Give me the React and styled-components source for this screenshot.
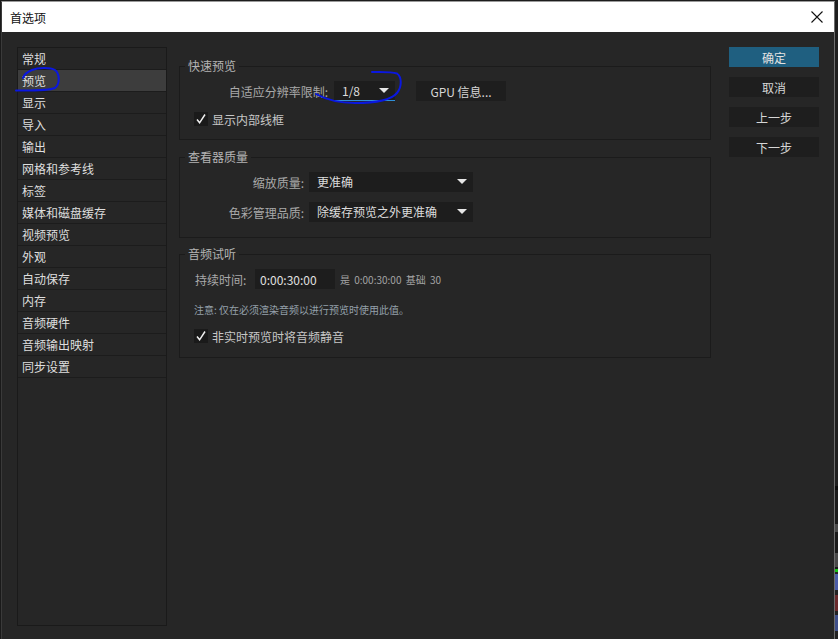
import React from 'react'
import styled, { createGlobalStyle } from 'styled-components'

const GlobalStyle = createGlobalStyle`
    html, body {
        margin: 0;
        padding: 0;
        background: #1c1c1c;
    }
    body {
        font-family: "Noto Sans CJK SC", "Noto Sans", "Liberation Sans", sans-serif;
        font-size: 12px;
    }
`;

const Screen = styled.div`
    display: flex;
    width: 838px;
    height: 639px;
    overflow: hidden;
    position: relative;
`;

const LeftEdge = styled.div`
    width: 1px;
    background: #1a1a1a;
`;

const Window = styled.div`
    width: 832px;
    margin-top: 1px;
    display: flex;
    flex-direction: column;
    border-top: 1px solid #9a9a9a;
    border-left: 1px solid #3a3a3a;
    border-right: 1px solid #6e6e6e;
`;

const TitleBar = styled.div`
    height: 30px;
    flex: none;
    background: #ffffff;
    display: flex;
    align-items: center;
    justify-content: space-between;
    padding: 0 8px 0 8px;
    color: #111;
    font-size: 12px;
`;

const CloseIcon = () => (
    <svg width="14" height="14" viewBox="0 0 14 14" style={{ marginRight: 2 }}>
        <path d="M1.5 1.5 L12.5 12.5 M12.5 1.5 L1.5 12.5" stroke="#111" strokeWidth="1.1" />
    </svg>
);

const Body = styled.div`
    flex: 1;
    background: #262626;
    display: flex;
    padding: 15px 15px 0 15px;
    gap: 12px;
`;

const Sidebar = styled.ul`
    list-style: none;
    margin: 0;
    padding: 0;
    width: 148px;
    height: 577px;
    flex: none;
    border: 1px solid #1a1a1a;
`;

const SideItem = styled.li`
    height: 21px;
    line-height: 21px;
    padding-left: 4px;
    border-bottom: 1px solid #1c1c1c;
    color: #dedede;
    background: ${p => (p.$active ? '#3d3d3d' : 'transparent')};
`;

const Main = styled.div`
    width: 532px;
    flex: none;
    padding-top: 11px;
    display: flex;
    flex-direction: column;
`;

const Group = styled.fieldset`
    margin: ${p => p.$top || 0}px 0 0 0;
    padding: 7px 0 ${p => p.$bottom || 11}px 0;
    border: 1px solid #1b1b1b;
    min-inline-size: 0;
    display: flex;
    flex-direction: column;
    gap: ${p => p.$gap || 10}px;
`;

const Legend = styled.legend`
    margin-left: 5px;
    padding: 0 3px;
    line-height: 16px;
    color: #b4b4b4;
`;

const Row = styled.div`
    display: flex;
    align-items: center;
    height: ${p => p.$h || 20}px;
    padding-left: ${p => p.$indent || 0}px;
`;

const Label = styled.span`
    width: ${p => p.$w}px;
    flex: none;
    text-align: ${p => p.$align || 'right'};
    color: #a9a9a9;
    margin-right: ${p => p.$gap || 6}px;
`;

const Dropdown = styled.div`
    width: ${p => p.$w}px;
    height: 20px;
    box-sizing: border-box;
    display: flex;
    align-items: center;
    justify-content: space-between;
    padding: 0 6px 0 8px;
    background: #1d1d1d;
    color: #dcdcdc;
    border-bottom: 1px solid ${p => (p.$focus ? '#2f8fd8' : '#1d1d1d')};
`;

const Arrow = styled.span`
    width: 0;
    height: 0;
    border-left: 5px solid transparent;
    border-right: 5px solid transparent;
    border-top: 5px solid #e6e6e6;
`;

const Button = styled.div`
    width: ${p => p.$w || 90}px;
    height: 20px;
    display: flex;
    align-items: center;
    justify-content: center;
    background: ${p => (p.$primary ? '#1f5f80' : '#1e1e1e')};
    color: ${p => (p.$primary ? '#e2e2e2' : '#d6d6d6')};
    margin-left: ${p => p.$ml || 0}px;
    flex: none;
`;

const CheckBox = styled.span`
    width: 14px;
    height: 14px;
    flex: none;
    background: #1a1a1a;
    display: flex;
    align-items: center;
    justify-content: center;
    margin-right: 4px;
`;

const CheckText = styled.span`
    color: #c6c6c6;
`;

const TimeInput = styled.div`
    width: 80px;
    height: 20px;
    box-sizing: border-box;
    padding-left: 5px;
    display: flex;
    align-items: center;
    background: #1d1d1d;
    color: #e0e0e0;
    margin-right: 5px;
`;

const SmallText = styled.span`
    font-size: 10px;
    color: #a4a4a4;
    word-spacing: 2px;
`;

const Note = styled.div`
    height: 14px;
    line-height: 14px;
    padding-left: 14px;
    margin-bottom: -4px;
    font-size: 10px;
    color: #94a0aa;
`;

const ButtonColumn = styled.div`
    display: flex;
    flex-direction: column;
    gap: 10px;
    margin-left: 6px;
`;

const RightStrip = styled.div`
    width: 3px;
    display: flex;
    flex-direction: column;
    background: #1e1e1e;
`;

const StripBlock = styled.div`
    height: ${p => p.$h}px;
    background: ${p => p.$c};
    flex: none;
`;

const Scribble = styled.svg`
    position: absolute;
    left: 0;
    top: 0;
    pointer-events: none;
`;

const Check = () => (
    <svg width="12" height="12" viewBox="0 0 12 12">
        <path d="M2 6.5 L4.6 9.8 L10 1.5" fill="none" stroke="#f0f0f0" strokeWidth="1.5" />
    </svg>
);

const categories = [
    '常规', '预览', '显示', '导入', '输出', '网格和参考线', '标签', '媒体和磁盘缓存',
    '视频预览', '外观', '自动保存', '内存', '音频硬件', '音频输出映射', '同步设置',
];

const strip = [
    [486, '#1e1e1e'], [4, '#0a0a0a'], [34, '#1a1a1a'], [8, '#4a4a4a'], [21, '#1a1a1a'],
    [14, '#4a4a4a'], [2, '#1a1a1a'], [3, '#17c317'], [2, '#222'], [16, '#4b5ca8'],
    [5, '#222'], [16, '#6a2a2c'], [4, '#222'], [16, '#3f4f8a'], [8, '#222'],
];

export default function App() {
    return (
        <>
            <GlobalStyle />
            <Screen>
                <LeftEdge />
                <Window>
                    <TitleBar>
                        <span>首选项</span>
                        <CloseIcon />
                    </TitleBar>
                    <Body>
                        <Sidebar>
                            {categories.map(c => (
                                <SideItem key={c} $active={c === '预览'}>{c}</SideItem>
                            ))}
                        </Sidebar>

                        <Main>
                            <Group $gap={9}>
                                <Legend>快速预览</Legend>
                                <Row>
                                    <Label $w={148}>自适应分辨率限制:</Label>
                                    <Dropdown $w={61} $focus>
                                        1/8 <Arrow />
                                    </Dropdown>
                                    <Button $ml={21}>GPU 信息...</Button>
                                </Row>
                                <Row $h={18} $indent={14}>
                                    <CheckBox><Check /></CheckBox>
                                    <CheckText>显示内部线框</CheckText>
                                </Row>
                            </Group>

                            <Group $top={9} $bottom={15}>
                                <Legend>查看器质量</Legend>
                                <Row>
                                    <Label $w={124} $gap={5}>缩放质量:</Label>
                                    <Dropdown $w={164}>
                                        更准确 <Arrow />
                                    </Dropdown>
                                </Row>
                                <Row>
                                    <Label $w={124} $gap={5}>色彩管理品质:</Label>
                                    <Dropdown $w={164}>
                                        除缓存预览之外更准确 <Arrow />
                                    </Dropdown>
                                </Row>
                            </Group>

                            <Group $top={8} $gap={14} $bottom={12}>
                                <Legend>音频试听</Legend>
                                <Row $indent={15}>
                                    <Label $w={54} $gap={0} $align="left">持续时间:</Label>
                                    <TimeInput>0:00:30:00</TimeInput>
                                    <SmallText>是 0:00:30:00 基础 30</SmallText>
                                </Row>
                                <Note>注意: 仅在必须渲染音频以进行预览时使用此值。</Note>
                                <Row $h={18} $indent={14}>
                                    <CheckBox><Check /></CheckBox>
                                    <CheckText>非实时预览时将音频静音</CheckText>
                                </Row>
                            </Group>
                        </Main>

                        <ButtonColumn>
                            <Button $primary>确定</Button>
                            <Button>取消</Button>
                            <Button>上一步</Button>
                            <Button>下一步</Button>
                        </ButtonColumn>
                    </Body>
                </Window>
                <RightStrip>
                    {strip.map(([h, c], i) => (
                        <StripBlock key={i} $h={h} $c={c} />
                    ))}
                </RightStrip>

                <Scribble width="838" height="639" viewBox="0 0 838 639">
                    <path
                        d="M16 90.5 C 30 90.5, 48 91, 55 88 C 60 84, 60 74, 55 70 C 50 67, 38 67.5, 32 70 C 27 72, 24 75, 23 78"
                        fill="none" stroke="#0a17e0" strokeWidth="2" strokeLinecap="round"
                    />
                    <path
                        d="M316 94 C 325 99, 336 103, 355 103 C 375 103, 391 100, 397 93 C 402 87, 402 77, 397 73.5 C 391 71.5, 381 72, 372 72"
                        fill="none" stroke="#0a17e0" strokeWidth="2" strokeLinecap="round"
                    />
                </Scribble>
            </Screen>
        </>
    )
}
